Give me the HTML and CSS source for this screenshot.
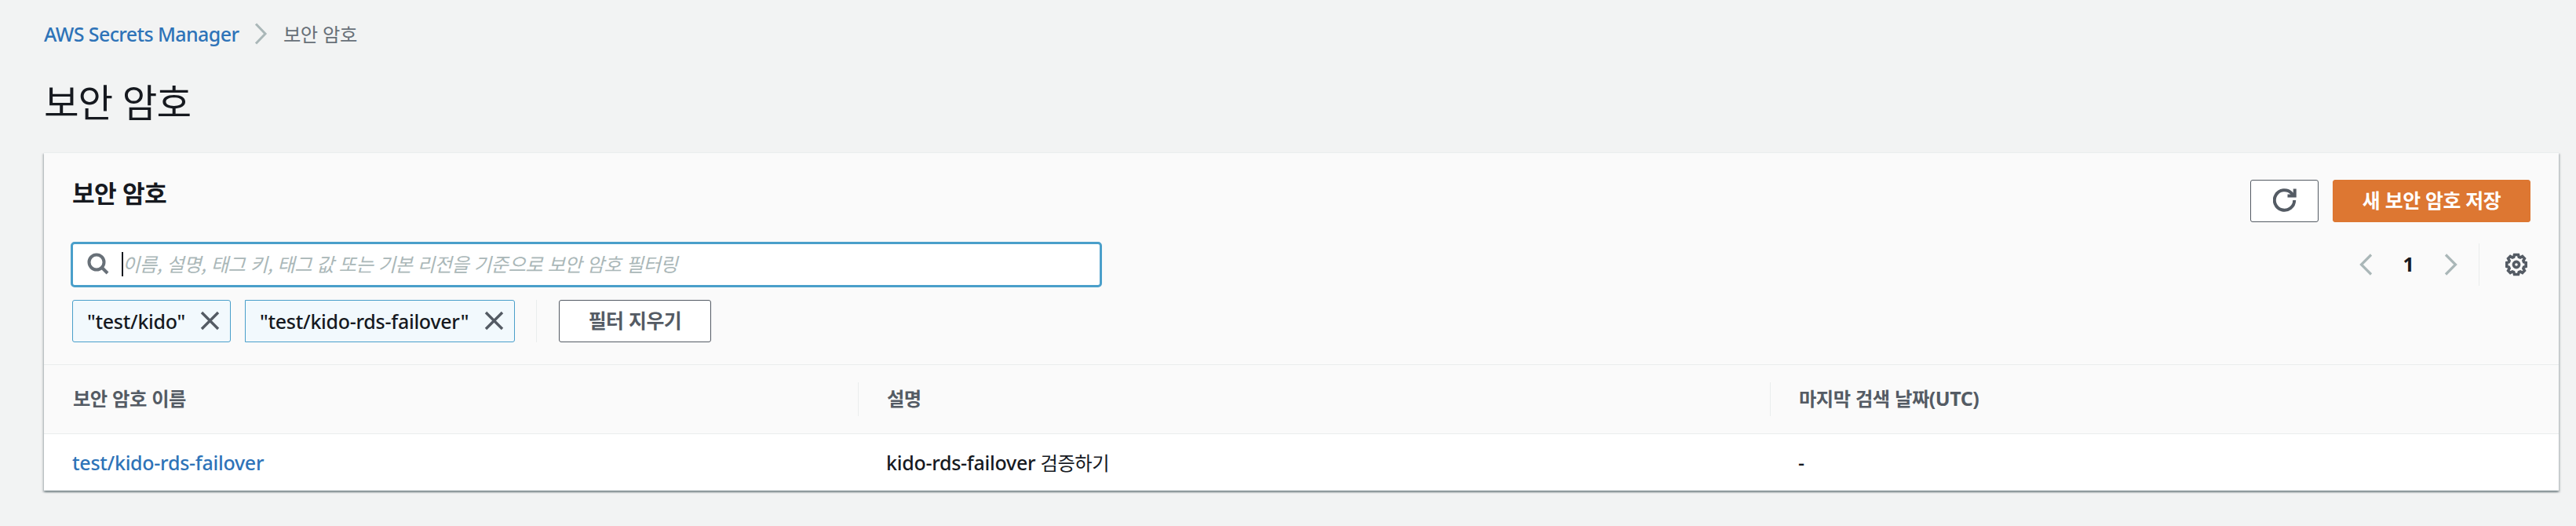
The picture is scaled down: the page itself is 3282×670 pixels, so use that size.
FILE: index.html
```
<!DOCTYPE html>
<html lang="ko">
<head>
<meta charset="utf-8">
<title>AWS Secrets Manager</title>
<link rel="stylesheet" href="styles.css">
</head>
<body>
<nav class="breadcrumb">
  <a class="crumb-link" href="#">AWS Secrets Manager</a>
  <svg class="crumb-sep" width="17" height="28" viewBox="0 0 17 28"><path d="M2 1.500 14 14 2 26.500"/></svg>
  <span class="ko crumb-current">보안 암호</span>
</nav>
<h1 class="ko page-title">보안 암호</h1>
<main class="card">
  <header class="card-header">
    <div class="title-row">
      <h2 class="ko card-title">보안 암호</h2>
      <div class="actions">
        <button class="btn btn-icon" aria-label="refresh">
          <svg width="30" height="30" viewBox="0 0 30 30"><path d="M27.200 15A12.700 12.700 0 1 1 23.600 6.100L26 9.500"/><path d="M27.700 0.500V9.500H18.500"/></svg>
        </button>
        <button class="btn btn-primary ko">새 보안 암호 저장</button>
      </div>
    </div>
    <div class="filter-row">
      <div class="search">
        <svg class="search-icon" width="28" height="28" viewBox="0 0 28 28"><circle cx="12" cy="12" r="9.500"/><path d="M18.500 18.500 26 26"/></svg>
        <span class="caret"></span>
        <span class="ko placeholder">이름, 설명, 태그 키, 태그 값 또는 기본 리전을 기준으로 보안 암호 필터링</span>
      </div>
      <div class="pager">
        <svg class="chev" width="17" height="28" viewBox="0 0 17 28"><path d="M15 1.500 2.500 14 15 26.500"/></svg>
        <span class="page-number">1</span>
        <svg class="chev" width="17" height="28" viewBox="0 0 17 28"><path d="M2 1.500 14.500 14 2 26.500"/></svg>
        <span class="divider"></span>
        <svg class="gear" width="30" height="30" viewBox="0 0 30 30"><path d="M12.500 2.500h5l.8 2.900 1.700.7 2.700-1.500 2.700 2.700-1.500 2.700.7 1.700 2.600.8v5l-2.600.8-.7 1.700 1.500 2.700-2.700 2.700-2.700-1.500-1.700.7-.8 2.900h-5l-.8-2.900-1.700-.7-2.700 1.500-2.700-2.700 1.500-2.700-.7-1.700-2.600-.8v-5l2.600-.8.7-1.700-1.500-2.700 2.700-2.700 2.700 1.500 1.700-.7z"/><circle cx="15" cy="15" r="3.600"/></svg>
      </div>
    </div>
    <div class="chips">
      <span class="chip">"test/kido"<svg width="25" height="25" viewBox="0 0 25 25"><path d="M2 2 23 23M23 2 2 23"/></svg></span>
      <span class="chip chip-joined">"test/kido-rds-failover"<svg width="25" height="25" viewBox="0 0 25 25"><path d="M2 2 23 23M23 2 2 23"/></svg></span>
      <span class="divider chips-divider"></span>
      <button class="btn btn-clear ko">필터 지우기</button>
    </div>
  </header>
  <div class="row row-head">
    <div class="ko cell">보안 암호 이름</div>
    <div class="ko cell">설명</div>
    <div class="ko cell">마지막 검색 날짜<span class="latin">(UTC)</span></div>
  </div>
  <div class="row row-body">
    <div class="cell"><a class="link" href="#">test/kido-rds-failover</a></div>
    <div class="cell">kido-rds-failover <span class="ko">검증하기</span></div>
    <div class="cell">-</div>
  </div>
</main>
</body>
</html>
```
FILE: styles.css
```
* { box-sizing: border-box; }
body {
  margin: 0;
  height: 670px;
  padding: 25px 22px 0 56px;
  background: #f2f3f3;
  color: #16191f;
  font: 500 25px/36px "Noto Sans", "Noto Sans CJK KR", sans-serif;
  letter-spacing: -0.270px;
}
svg { fill: none; flex: none; display: block; }
a { text-decoration: none; color: #2e73b8; }
.ko { font-family: "Noto Sans CJK KR", "Noto Sans", sans-serif; font-size: 24.300px; letter-spacing: -0.480px; }
.breadcrumb { display: flex; height: 36px; }
.crumb-link { letter-spacing: -0.600px; width: 248px; white-space: nowrap; }
.crumb-sep { margin: 4px 0 0 20px; stroke: #aab7b8; stroke-width: 3; }
.crumb-current { margin-left: 20px; color: #687078; font-weight: 400; line-height: 35px; }
.page-title { margin: 31px 0 0; height: 72px; font-size: 48.500px; line-height: 72px; font-weight: 400; letter-spacing: -1px; }
.card {
  margin-top: 30px;
  height: 431px;
  background: #fff;
  border-top: 1px solid #eaeded;
  box-shadow: 0 2px 2px rgba(0,28,36,.3), 2px 2px 2px rgba(0,28,36,.15), -2px 2px 2px rgba(0,28,36,.15);
}
.card-header { height: 270px; padding: 34px 36px 0 34px; background: #fafafa; border-bottom: 1px solid #eaeded; }
.title-row { display: flex; justify-content: space-between; height: 79px; }
.card-title { margin: -4px 0 0 2px; font-size: 31.200px; line-height: 40px; font-weight: 700; letter-spacing: -0.700px; }
.actions { display: flex; gap: 18px; }
.btn {
  height: 54px;
  padding: 0 0 4px;
  display: flex;
  align-items: center;
  justify-content: center;
  border: 1px solid #545b64;
  border-radius: 3px;
  background: #fff;
  color: #545b64;
  font-size: 24.900px;
  font-weight: 700;
}
.btn-icon { width: 87px; padding: 0; stroke: #545b64; stroke-width: 4; }
.btn-icon svg { margin-top: -2px; }
.btn-primary { width: 252px; border-color: #dd7732; background: #dd7732; color: #fff; }
.filter-row { display: flex; justify-content: space-between; height: 58px; }
.search {
  width: 1314px;
  height: 58px;
  display: flex;
  align-items: center;
  padding-left: 18px;
  border: 3px solid #4a9fca;
  border-radius: 5px;
  background: #fff;
}
.search-icon { stroke: #687078; stroke-width: 4; margin-bottom: 2px; }
.caret { width: 2px; height: 31px; margin: 0 0 1px 16px; background: #16191f; }
.placeholder { margin: 0 0 3px -1px; color: #aab7b8; font-style: italic; font-weight: 400; white-space: nowrap; }
.pager { display: flex; align-items: center; height: 58px; }
.chev { stroke: #aab7b8; stroke-width: 3.200; }
.page-number { width: 91px; text-align: center; font-weight: 700; line-height: 34px; margin-bottom: 2px; }
.divider { width: 1px; height: 54px; background: #eaeded; }
.pager .divider { margin-left: 27px; }
.gear { margin: 0 3px 0 32px; stroke: #545b64; stroke-width: 3.600; }
.chips { display: flex; margin: 16px 0 0 2px; }
.chip {
  display: flex;
  align-items: center;
  justify-content: space-between;
  width: 202px;
  height: 54px;
  padding: 0 13px 0 18px;
  margin-right: 18px;
  border: 1px solid #4a9fca;
  border-radius: 3px;
  background: #f2f9fd;
  white-space: nowrap;
}
.chip svg { stroke: #545b64; stroke-width: 3.400; margin-bottom: 1px; }
.chip-joined { width: 344px; border-radius: 0 3px 3px 0; margin-right: 27px; }
.chips-divider { margin-right: 28px; }
.btn-clear { width: 194px; }
.row { display: grid; grid-template-columns: 1037px 1162px 1fr; align-items: center; }
.cell { padding-left: 36px; white-space: nowrap; }
.row-head { height: 88px; background: #fafafa; border-bottom: 1px solid #eaeded; color: #545b64; font-weight: 700; }
.row-head .cell { height: 43px; line-height: 39px; border-left: 1px solid #eaeded; }
.row-head .cell:first-child { border-left: 0; padding-left: 37px; }
.latin { font-family: "Noto Sans", sans-serif; font-size: 25px; }
.row-body { height: 72px; border-bottom: 1px solid #eaeded; }
.row-body .ko { font-weight: 400; }
```
